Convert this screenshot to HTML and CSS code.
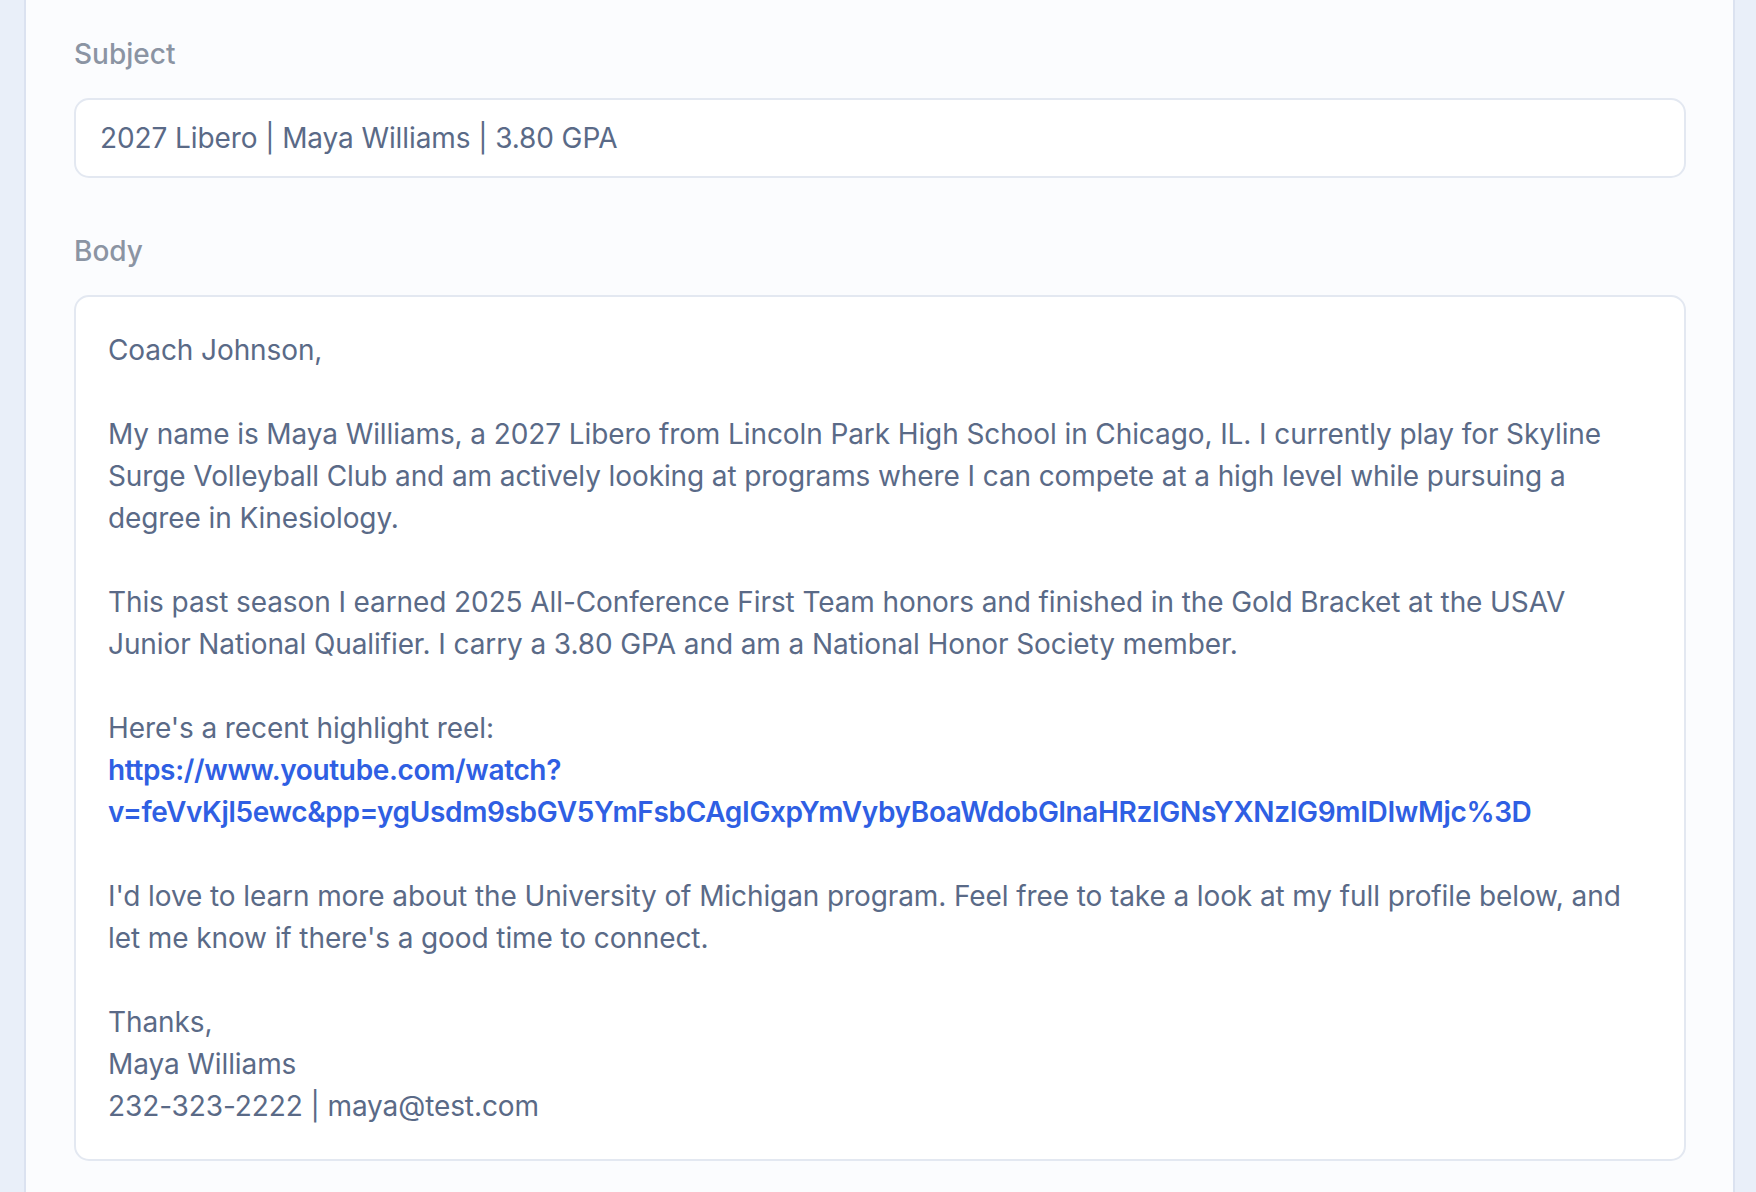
FILE: index.html
```html
<!DOCTYPE html>
<html lang="en">
<head>
  <meta charset="UTF-8" />
  <meta name="viewport" content="width=device-width, initial-scale=1.0"/>
  <title>Email Preview</title>
  <link rel="stylesheet" href="styles.css">
</head>
<body>
  <div class="panel">
    <div class="field">
      <label class="field-label">Subject</label>
      <div class="subject-box">2027 Libero | Maya Williams | 3.80 GPA</div>
    </div>

    <div class="field">
      <label class="field-label">Body</label>
      <div class="body-box">
        <p>Coach Johnson,</p>
        <p>My name is Maya Williams, a 2027 Libero from Lincoln Park High School in Chicago, IL. I currently play for Skyline Surge Volleyball Club and am actively looking at programs where I can compete at a high level while pursuing a degree in Kinesiology.</p>
        <p>This past season I earned 2025 All-Conference First Team honors and finished in the Gold Bracket at the USAV Junior National Qualifier. I carry a 3.80 GPA and am a National Honor Society member.</p>
        <p>Here's a recent highlight reel:<br>
          <a class="link" href="#">https://www.youtube.com/watch?<wbr>v=feVvKjl5ewc&amp;pp=ygUsdm9sbGV5YmFsbCAgIGxpYmVybyBoaWdobGlnaHRzIGNsYXNzIG9mIDIwMjc%3D</a></p>
        <p>I'd love to learn more about the University of Michigan program. Feel free to take a look at my full profile below, and let me know if there's a good time to connect.</p>
        <p>Thanks,<br>Maya Williams<br>232-323-2222 | maya@test.com</p>
      </div>
    </div>
  </div>
</body>
</html>
```

FILE: styles.css
```css
* { box-sizing: border-box; }
html, body { height: 100%; }
body {
  margin: 0;
  padding: 0 21px 0 24px;
  font-family: Inter, "Noto Sans", sans-serif;
  background-color: #e9eff9;
  color: #5a6a87;
}
.panel {
  min-height: 100%;
  background-color: #fbfcfe;
  border-left: 2px solid #dbe2f0;
  border-right: 2px solid #dbe2f0;
  padding: 35px 47px 40px 48px;
}
.field { margin-bottom: 54px; }
.field-label {
  display: block;
  font-size: 28px;
  line-height: 39px;
  font-weight: 500;
  color: #8b94a3;
  margin-bottom: 24px;
}
.subject-box {
  background-color: #fff;
  border: 2px solid #e3e8f1;
  border-radius: 15px;
  height: 80px;
  padding: 0 24px;
  display: flex;
  align-items: center;
  font-size: 28px;
  letter-spacing: -0.1px;
  color: #5a6a87;
}
.body-box {
  background-color: #fff;
  border: 2px solid #e3e8f1;
  border-radius: 15px;
  padding: 32px 31px 32px 32px;
  font-size: 28px;
  line-height: 42px;
  letter-spacing: -0.1px;
}
.body-box p { margin: 0 0 42px; }
.body-box p:last-child { margin-bottom: 0; }
.link {
  color: #2f5fe3;
  font-weight: 600;
  letter-spacing: -0.35px;
  text-decoration: none;
}
```
